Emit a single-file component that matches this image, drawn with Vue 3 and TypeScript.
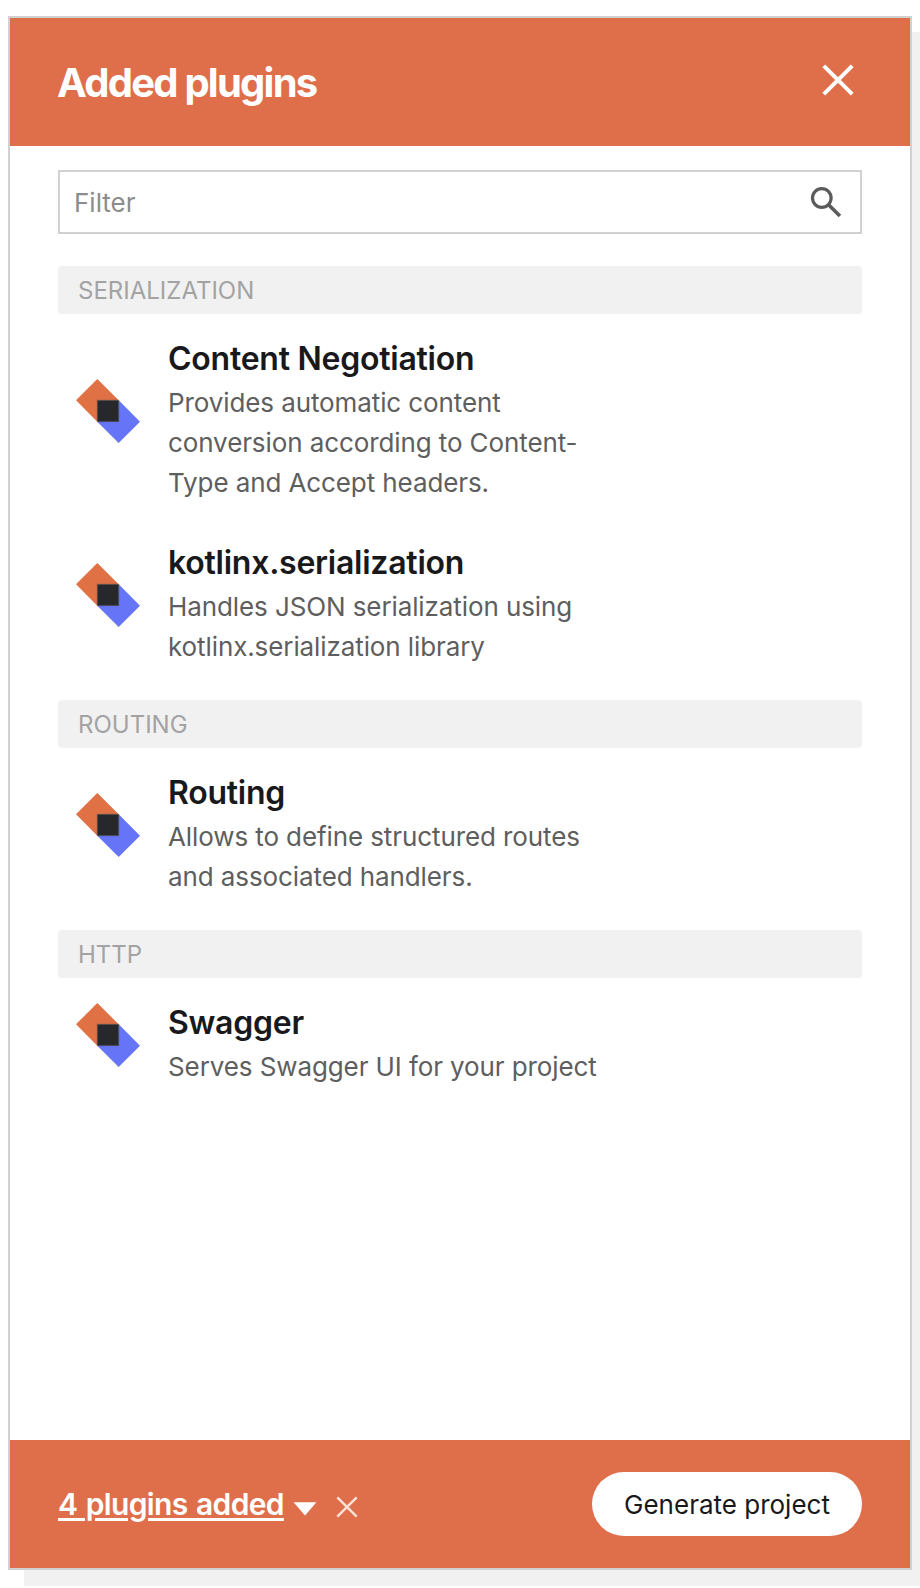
<script setup lang="ts">
interface Plugin {
  name: string
  description: string
}

interface Category {
  title: string
  plugins: Plugin[]
}

const categories: Category[] = [
  {
    title: 'SERIALIZATION',
    plugins: [
      {
        name: 'Content Negotiation',
        description: 'Provides automatic content conversion according to Content-Type and Accept headers.',
      },
      {
        name: 'kotlinx.serialization',
        description: 'Handles JSON serialization using kotlinx.serialization library',
      },
    ],
  },
  {
    title: 'ROUTING',
    plugins: [
      { name: 'Routing', description: 'Allows to define structured routes and associated handlers.' },
    ],
  },
  {
    title: 'HTTP',
    plugins: [{ name: 'Swagger', description: 'Serves Swagger UI for your project' }],
  },
]
</script>

<template>
  <section class="dialog">
    <header class="header">
      <h1 class="title">Added plugins</h1>
      <button class="icon-button close" type="button" aria-label="Close">
        <svg width="32" height="32" viewBox="0 0 32 32" fill="none" stroke="#fff" stroke-width="4">
          <path d="M1.8 1.8 30.2 30.2M30.2 1.8 1.8 30.2" />
        </svg>
      </button>
    </header>

    <main class="content">
      <div class="filter">
        <span class="placeholder">Filter</span>
        <svg width="32" height="32" viewBox="0 0 32 32" fill="none" stroke="#5b5b5b">
          <circle cx="11.8" cy="12" r="9.3" stroke-width="3.2" />
          <path d="M18.6 18.8 29.9 30.1" stroke-width="3.6" />
        </svg>
      </div>

      <div v-for="category in categories" :key="category.title" class="category">
        <h2 class="category-title">{{ category.title }}</h2>
        <article v-for="plugin in category.plugins" :key="plugin.name" class="plugin">
          <svg class="logo" width="64" height="64" viewBox="0 0 64 64">
            <path d="M21.3 0 42.7 21.3 21.3 42.7 0 21.3z" fill="#e07145" />
            <path d="M42.7 21.3 64 42.7 42.7 64 21.3 42.7z" fill="#6674f8" />
            <path d="M21.3 21.3h21.4v21.4H21.3z" fill="#27282c" stroke="#55565a" stroke-width=".7" />
          </svg>
          <div class="details">
            <h3 class="name">{{ plugin.name }}</h3>
            <p class="description">{{ plugin.description }}</p>
          </div>
        </article>
      </div>
    </main>

    <footer class="footer">
      <div class="summary">
        <a class="count">4 plugins added</a>
        <svg class="caret" width="24" height="14" viewBox="0 0 24 14">
          <path d="M.6.3h22.8L12 13.5z" fill="#fff" />
        </svg>
        <button class="icon-button clear" type="button" aria-label="Remove all">
          <svg width="22" height="22" viewBox="0 0 22 22" fill="none" stroke="#fbe3da" stroke-width="2.4">
            <path d="M1.3 1.3 20.7 20.7M20.7 1.3 1.3 20.7" />
          </svg>
        </button>
      </div>
      <button class="generate" type="button">Generate project</button>
    </footer>
  </section>
</template>

<style>
body {
  margin: 0;
  background: #fff;
  overflow: hidden;
}
</style>

<style scoped>
.dialog {
  box-sizing: border-box;
  display: flex;
  flex-direction: column;
  width: 904px;
  height: 1554px;
  margin: 16px 8px 18px;
  border: 2px solid #d1d1d1;
  background: #fff;
  box-shadow: 16px 16px 0 #f1f1f1;
  font-family: Inter, 'Liberation Sans', sans-serif;
  color: #19191c;
}

.header,
.footer {
  box-sizing: border-box;
  display: flex;
  align-items: center;
  justify-content: space-between;
  flex: none;
  height: 128px;
  padding: 0 48px;
  background: #df6f4a;
  color: #fff;
}

.title {
  margin: 2px 0 0 -1px;
  font-size: 40px;
  line-height: 48px;
  font-weight: 700;
  letter-spacing: -1.75px;
}

.icon-button {
  display: block;
  padding: 0;
  border: 0;
  background: none;
}

.icon-button svg {
  display: block;
}

.close {
  margin: 0 8px 4px 0;
}

.content {
  flex: 1;
  padding: 24px 48px 0;
}

.filter {
  box-sizing: border-box;
  display: flex;
  align-items: center;
  justify-content: space-between;
  height: 64px;
  margin-bottom: 32px;
  padding: 0 18px 0 14px;
  border: 2px solid #d1d1d1;
}

.placeholder {
  margin-top: 2px;
  font-size: 26px;
  line-height: 40px;
  color: #8c8c8c;
}

.category {
  margin-bottom: 18px;
}

.category-title {
  height: 48px;
  margin: 0;
  padding-left: 20px;
  border-radius: 4px;
  background: #f1f1f1;
  font-size: 24px;
  line-height: 50px;
  font-weight: 400;
  color: #a3a3a3;
}

.plugin {
  display: flex;
  align-items: center;
  padding: 25px 0 15px 18px;
}

.logo {
  flex: none;
  margin: 0 28px 20px 0;
}

.details {
  width: 436px;
}

.name {
  margin: 0 0 4px;
  font-size: 32px;
  line-height: 40px;
  font-weight: 600;
  letter-spacing: -0.25px;
}

.description {
  margin: 0;
  font-size: 26px;
  line-height: 40px;
  letter-spacing: -0.1px;
  color: #5e5e5e;
}

.summary {
  display: flex;
  align-items: center;
}

.count {
  font-size: 30px;
  line-height: 40px;
  font-weight: 600;
  letter-spacing: -0.65px;
  word-spacing: 1.5px;
  text-decoration: underline;
  text-decoration-thickness: 3px;
  text-underline-offset: 3px;
}

.caret {
  margin: 10px 19px 0 9px;
}

.clear {
  margin-top: 6px;
}

.generate {
  width: 270px;
  height: 64px;
  padding: 2px 0 0;
  border: 0;
  border-radius: 32px;
  background: #fff;
  font: 400 26px/40px Inter, 'Liberation Sans', sans-serif;
  color: #19191c;
}
</style>
